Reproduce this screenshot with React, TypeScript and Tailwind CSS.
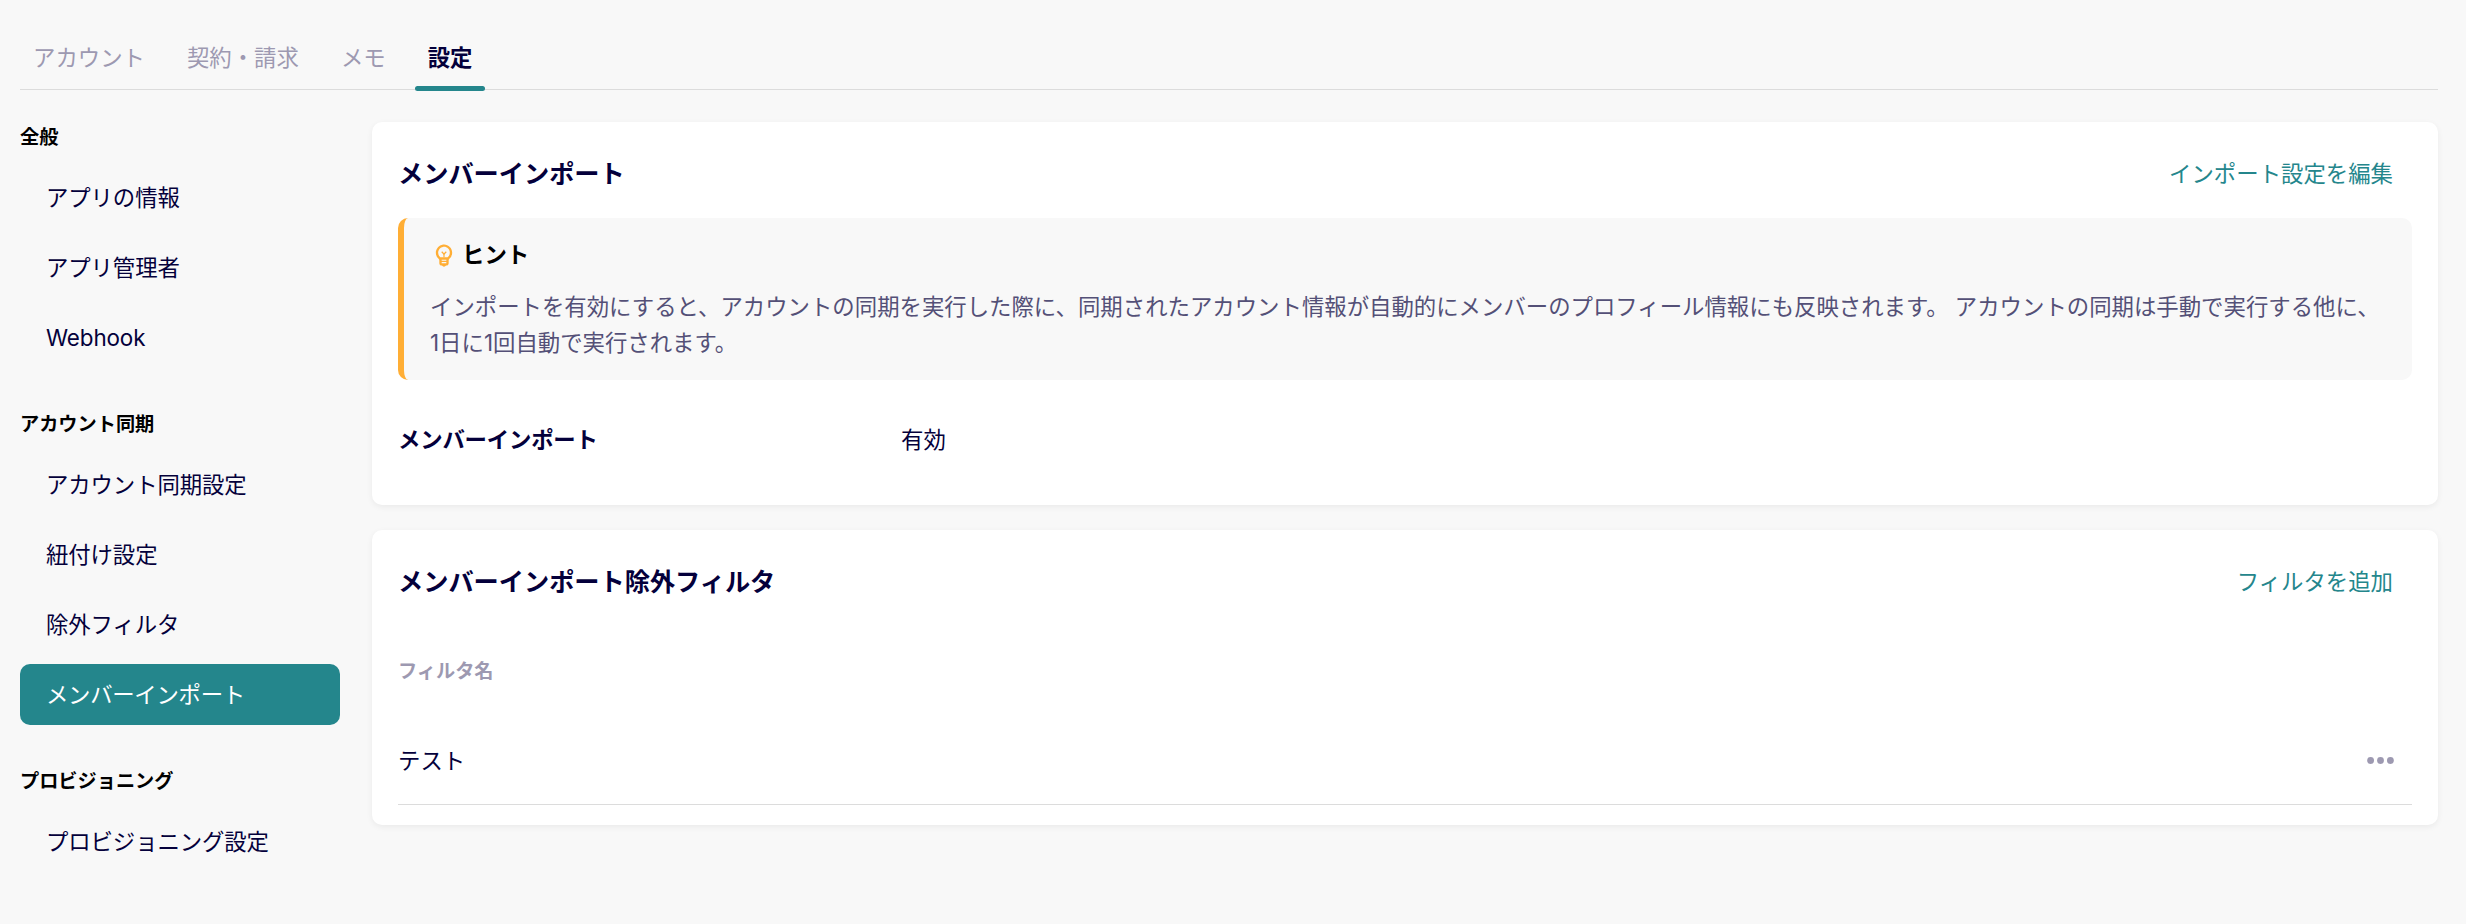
import type { ReactNode } from 'react';
import { MdOutlineEmojiObjects } from 'react-icons/md';

const tabs = [
  { label: 'アカウント' },
  { label: '契約・請求' },
  { label: 'メモ' },
  { label: '設定', active: true },
];

const menu = [
  {
    title: '全般',
    items: ['アプリの情報', 'アプリ管理者', 'Webhook'],
  },
  {
    title: 'アカウント同期',
    items: ['アカウント同期設定', '紐付け設定', '除外フィルタ', 'メンバーインポート'],
  },
  {
    title: 'プロビジョニング',
    items: ['プロビジョニング設定'],
  },
];

const activeItem = 'メンバーインポート';

function Tabs() {
  return (
    <nav className="flex h-[90px] items-end gap-4 border-b border-[#dcdcdc]">
      {tabs.map((tab) => (
        <a
          key={tab.label}
          href="#"
          className={
            tab.active
              ? 'relative flex h-[65px] items-center px-[13px] pt-[2px] font-bold text-[#04003b]'
              : 'flex h-[65px] items-center px-[13px] pt-[2px] text-[#9d99b1]'
          }
        >
          {tab.label}
          {tab.active && (
            <span className="absolute inset-x-0 -bottom-[2px] h-[5px] rounded-full bg-[#24868c]" />
          )}
        </a>
      ))}
    </nav>
  );
}

function Sidebar() {
  return (
    <aside className="flex w-80 shrink-0 flex-col gap-[41px]">
      {menu.map((group) => (
        <section key={group.title}>
          <h2 className="mb-4 pt-px text-[19.2px] leading-7 font-bold text-black">{group.title}</h2>
          <ul className="flex flex-col gap-[9px]">
            {group.items.map((item) => (
              <li key={item}>
                <a
                  href="#"
                  className={
                    item === activeItem
                      ? 'flex h-[61px] items-center rounded-[10px] bg-[#24868c] px-[26px] tracking-[-0.3px] text-white'
                      : 'flex h-[61px] items-center rounded-[10px] px-[26px] pt-px tracking-[-0.1px] text-[#04003b]'
                  }
                >
                  {item}
                </a>
              </li>
            ))}
          </ul>
        </section>
      ))}
    </aside>
  );
}

function Card({ title, action, children }: { title: string; action: string; children: ReactNode }) {
  return (
    <section className="rounded-[10px] bg-white px-[26px] shadow-[0_2px_6px_rgba(0,0,0,0.06)]">
      <header className="flex h-24 items-center justify-between pt-[7px]">
        <h2 className="text-[25.2px] font-bold">{title}</h2>
        <button className="mr-[19px] text-[#24868c]">{action}</button>
      </header>
      {children}
    </section>
  );
}

export default function App() {
  return (
    <div className="min-h-screen bg-[#f8f8f8] pr-7 pl-5 font-[Inter,'Noto_Sans_CJK_JP',sans-serif] text-[22.4px] leading-9 text-[#04003b]">
      <Tabs />

      <div className="flex gap-8 pt-8">
        <Sidebar />

        <main className="flex min-w-0 flex-1 flex-col gap-[25px]">
          <Card title="メンバーインポート" action="インポート設定を編集">
            {/* Hint */}
            <div className="h-[162px] rounded-[10px] border-l-[6px] border-[#ffae35] bg-[#f8f8f8] px-[26px] pt-[19px]">
              <div className="flex items-center gap-1 font-bold text-black">
                <MdOutlineEmojiObjects className="size-7 text-[#ffae35]" />
                ヒント
              </div>
              <p className="mt-4 text-[#545077]">
                インポートを有効にすると、アカウントの同期を実行した際に、同期されたアカウント情報が自動的にメンバーのプロフィール情報にも反映されます。 アカウントの同期は手動で実行する他に、1日に1回自動で実行されます。
              </p>
            </div>

            <dl className="flex h-[125px] items-center pb-[6px]">
              <dt className="w-[503px] font-bold tracking-[-0.2px]">メンバーインポート</dt>
              <dd>有効</dd>
            </dl>
          </Card>

          <Card title="メンバーインポート除外フィルタ" action="フィルタを追加">
            <div className="flex h-[90px] items-center text-[19.2px] font-bold text-[#9d99b1]">
              フィルタ名
            </div>
            <div className="mb-5 flex h-[89px] items-center justify-between border-b border-[#dcdcdc] pt-px">
              <span>テスト</span>
              <button className="mr-[18px] text-[#9d99b1]" aria-label="メニュー">
                <svg className="h-[7px] w-[27px]" viewBox="0 0 27 7" fill="currentColor">
                  <circle cx="3.6" cy="3.5" r="3.4" />
                  <circle cx="13.5" cy="3.5" r="3.4" />
                  <circle cx="23.4" cy="3.5" r="3.4" />
                </svg>
              </button>
            </div>
          </Card>
        </main>
      </div>
    </div>
  );
}
